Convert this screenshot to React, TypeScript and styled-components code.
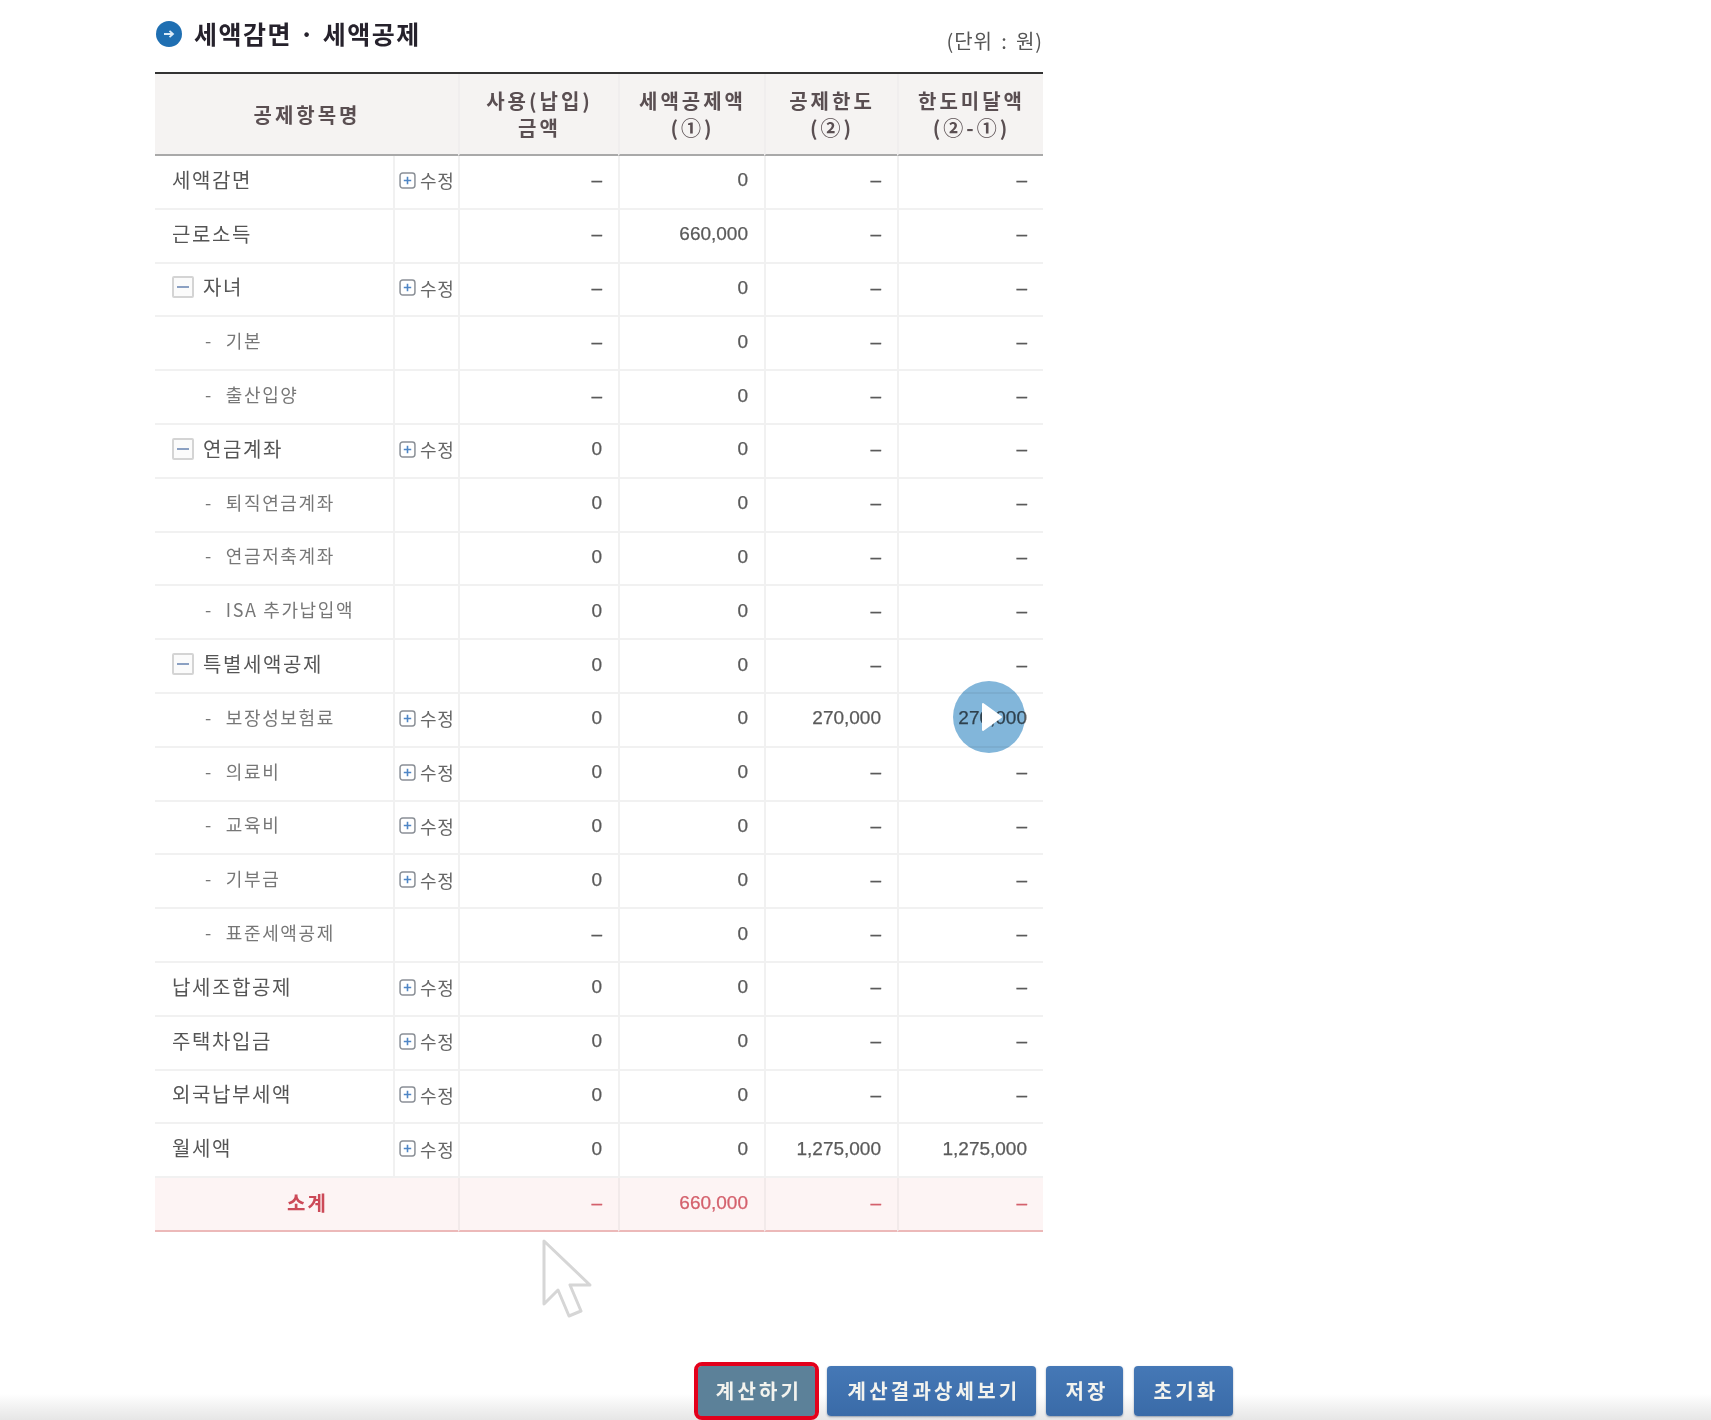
import React from 'react';
import styled, { createGlobalStyle } from 'styled-components';

const KR = `"Noto Sans CJK KR", "Noto Sans", sans-serif`;
const NUM = `"Liberation Sans", "Noto Sans CJK KR", sans-serif`;

const GlobalStyle = createGlobalStyle`
    html, body {
        margin: 0;
        padding: 0;
        background: #fff;
    }
`;

interface RowData {
    name: string;
    level: 'top' | 'group' | 'child';
    edit?: boolean;
    used: string;
    credit: string;
    limit: string;
    remain: string;
}

const rows: RowData[] = [
    { name: '세액감면', level: 'top', edit: true, used: '–', credit: '0', limit: '–', remain: '–' },
    { name: '근로소득', level: 'top', used: '–', credit: '660,000', limit: '–', remain: '–' },
    { name: '자녀', level: 'group', edit: true, used: '–', credit: '0', limit: '–', remain: '–' },
    { name: '기본', level: 'child', used: '–', credit: '0', limit: '–', remain: '–' },
    { name: '출산입양', level: 'child', used: '–', credit: '0', limit: '–', remain: '–' },
    { name: '연금계좌', level: 'group', edit: true, used: '0', credit: '0', limit: '–', remain: '–' },
    { name: '퇴직연금계좌', level: 'child', used: '0', credit: '0', limit: '–', remain: '–' },
    { name: '연금저축계좌', level: 'child', used: '0', credit: '0', limit: '–', remain: '–' },
    { name: 'ISA 추가납입액', level: 'child', used: '0', credit: '0', limit: '–', remain: '–' },
    { name: '특별세액공제', level: 'group', used: '0', credit: '0', limit: '–', remain: '–' },
    { name: '보장성보험료', level: 'child', edit: true, used: '0', credit: '0', limit: '270,000', remain: '270,000' },
    { name: '의료비', level: 'child', edit: true, used: '0', credit: '0', limit: '–', remain: '–' },
    { name: '교육비', level: 'child', edit: true, used: '0', credit: '0', limit: '–', remain: '–' },
    { name: '기부금', level: 'child', edit: true, used: '0', credit: '0', limit: '–', remain: '–' },
    { name: '표준세액공제', level: 'child', used: '–', credit: '0', limit: '–', remain: '–' },
    { name: '납세조합공제', level: 'top', edit: true, used: '0', credit: '0', limit: '–', remain: '–' },
    { name: '주택차입금', level: 'top', edit: true, used: '0', credit: '0', limit: '–', remain: '–' },
    { name: '외국납부세액', level: 'top', edit: true, used: '0', credit: '0', limit: '–', remain: '–' },
    { name: '월세액', level: 'top', edit: true, used: '0', credit: '0', limit: '1,275,000', remain: '1,275,000' },
];

const Page = styled.div`
    position: relative;
    height: 1420px;
    display: flex;
    flex-direction: column;
    overflow: hidden;
    filter: blur(0.45px);
`;

const Content = styled.main`
    width: 888px;
    margin-left: 155px;
    flex: 1;
`;

const TitleRow = styled.header`
    height: 72px;
    display: flex;
    justify-content: space-between;
    box-sizing: border-box;
`;

const Title = styled.h2`
    margin: 16px 0 0;
    display: flex;
    align-items: center;
    gap: 12px;
    height: 34px;
    font: 700 25px/34px ${KR};
    color: #26222c;
    letter-spacing: 1.5px;
`;

const TitleIcon = styled.svg`
    width: 26px;
    height: 26px;
    flex: none;
    margin: 2px 0 0 1px;
`;

const Unit = styled.span`
    margin-top: 27px;
    font: 400 20px/28px ${KR};
    letter-spacing: 0.9px;
    word-spacing: 3px;
    color: #555;
`;

const Table = styled.table`
    width: 888px;
    table-layout: fixed;
    border-collapse: separate;
    border-spacing: 0;
    border-top: 2px solid #333;
`;

const HeadCell = styled.th`
    box-sizing: border-box;
    height: 82px;
    padding: 0 0 0 1px;
    background: #f5f3f2;
    border-bottom: 2px solid #a9a9a9;
    border-left: 2px solid #f0eeee;
    font: 700 20px/27px ${KR};
    letter-spacing: 3px;
    color: #5a4f52;
    text-align: center;

    &:first-child {
        border-left: 0;
    }
`;

const NameCell = styled.td<{ $level: RowData['level'] }>`
    box-sizing: border-box;
    height: 53.8px;
    padding: 0 0 ${(p) => (p.$level === 'child' ? 6 : 4)}px ${(p) => (p.$level === 'child' ? 50 : 17)}px;
    border-bottom: 2px solid #f1f1f1;
    font: 400 ${(p) => (p.$level === 'child' ? 18 : 20)}px/24px ${KR};
    letter-spacing: 1.6px;
    color: ${(p) => (p.$level === 'child' ? '#777' : '#555')};
    white-space: nowrap;
`;

const NameInner = styled.span`
    display: flex;
    align-items: center;
    gap: 9px;
`;

const ChildDash = styled.span`
    margin-right: 4px;
`;

const Toggle = styled.span`
    box-sizing: border-box;
    width: 22px;
    height: 22px;
    flex: none;
    display: flex;
    align-items: center;
    justify-content: center;
    border: 2px solid #d4d4d4;
    border-radius: 2px;
    background: #fbfbfb;

    &::before {
        content: '';
        width: 12px;
        height: 2px;
        background: #8ba0c2;
    }
`;

const EditCell = styled.td`
    box-sizing: border-box;
    padding: 0 0 3px 4px;
    border-left: 2px solid #f1f1f1;
    border-bottom: 2px solid #f1f1f1;
    font: 400 18px/24px ${KR};
    letter-spacing: 0.6px;
    color: #666;
    white-space: nowrap;
`;

const EditInner = styled.span`
    display: flex;
    align-items: center;
    gap: 4px;
`;

const PlusIcon = styled.svg`
    width: 17px;
    height: 17px;
    flex: none;
`;

const NumCell = styled.td`
    box-sizing: border-box;
    padding: 0 16px 3px 0;
    border-left: 2px solid #f1f1f1;
    border-bottom: 2px solid #f1f1f1;
    font: 400 19px/24px ${NUM};
    -webkit-text-stroke: 0.25px currentColor;
    color: #5a5a5a;
    text-align: right;
`;

const TotalName = styled.td`
    box-sizing: border-box;
    height: 53.8px;
    padding: 0 0 3px 2px;
    background: #fdf4f4;
    border-bottom: 2px solid #ecb9b9;
    font: 700 20px/24px ${KR};
    color: #cc4a58;
    letter-spacing: 2px;
    text-align: center;
`;

const TotalNum = styled(NumCell)`
    background: #fdf4f4;
    border-left-color: #f2eaea;
    border-bottom-color: #ecb9b9;
    color: #d4606c;
`;

const PlayBadge = styled.div`
    position: absolute;
    left: 953px;
    top: 681px;
    width: 72px;
    height: 72px;
    display: flex;
    align-items: center;
    justify-content: center;

    &::before {
        content: '';
        position: absolute;
        inset: 0;
        border-radius: 50%;
        background: #82b6da;
        mix-blend-mode: multiply;
    }
`;

const PlayIcon = styled.svg`
    position: relative;
    width: 22px;
    height: 30px;
    margin-left: 5px;
`;

const Cursor = styled.svg`
    position: absolute;
    left: 540px;
    top: 1236px;
    width: 54px;
    height: 84px;
`;

const Footer = styled.footer`
    height: 60px;
    padding-left: 694px;
    display: flex;
    align-items: flex-start;
    background: linear-gradient(to bottom, #fff 0, #fff 34px, #f1f1f1 48px, #e6e6e6 60px);
`;

const Button = styled.button<{ $width: number; $active?: boolean; $gap?: number }>`
    box-sizing: border-box;
    width: ${(p) => p.$width}px;
    height: 50px;
    margin: 6px 0 0 ${(p) => p.$gap ?? 0}px;
    padding: 0 0 0 5px;
    border: 0;
    border-radius: 4px;
    background: linear-gradient(to bottom, #4578b6, #3a6ba8);
    box-shadow: 0 1px 2px rgba(60, 80, 110, 0.5);
    font: 700 20px/1 ${KR};
    letter-spacing: 3.2px;
    color: #f3f3ee;

    ${(p) =>
        p.$active &&
        `
        background: #5c8199;
        outline: 4px solid #e3001b;
        outline-offset: 0;
        margin-left: 4px;
        `}
`;

const Plus = () => (
    <PlusIcon viewBox="0 0 16 16">
        <rect x="1" y="1" width="14" height="14" rx="2.5" fill="#fff" stroke="#8a8f96" strokeWidth="1.4" />
        <path d="M8 4.5v7M4.5 8h7" stroke="#4f86c6" strokeWidth="1.5" />
    </PlusIcon>
);

const App = () => (
    <Page>
        <GlobalStyle />
        <Content>
            <TitleRow>
                <Title>
                    <TitleIcon viewBox="0 0 26 26">
                        <circle cx="13" cy="13" r="13" fill="#1f6fb2" />
                        <path d="M8 13h9M13.5 9.8 17 13l-3.5 3.2" fill="none" stroke="#dcecf8" strokeWidth="1.8" />
                    </TitleIcon>
                    세액감면 · 세액공제
                </Title>
                <Unit>(단위 : 원)</Unit>
            </TitleRow>
            <Table>
                <colgroup>
                    <col width={238} />
                    <col width={65} />
                    <col width={160} />
                    <col width={146} />
                    <col width={133} />
                    <col width={146} />
                </colgroup>
                <thead>
                    <tr>
                        <HeadCell colSpan={2}>공제항목명</HeadCell>
                        <HeadCell>
                            사용(납입)
                            <br />
                            금액
                        </HeadCell>
                        <HeadCell>
                            세액공제액
                            <br />
                            (①)
                        </HeadCell>
                        <HeadCell>
                            공제한도
                            <br />
                            (②)
                        </HeadCell>
                        <HeadCell>
                            한도미달액
                            <br />
                            (②-①)
                        </HeadCell>
                    </tr>
                </thead>
                <tbody>
                    {rows.map((row) => (
                        <tr key={row.name}>
                            <NameCell $level={row.level}>
                                <NameInner>
                                    {row.level === 'group' && <Toggle />}
                                    {row.level === 'child' && <ChildDash>-</ChildDash>}
                                    {row.name}
                                </NameInner>
                            </NameCell>
                            <EditCell>
                                {row.edit && (
                                    <EditInner>
                                        <Plus />
                                        수정
                                    </EditInner>
                                )}
                            </EditCell>
                            <NumCell>{row.used}</NumCell>
                            <NumCell>{row.credit}</NumCell>
                            <NumCell>{row.limit}</NumCell>
                            <NumCell>{row.remain}</NumCell>
                        </tr>
                    ))}
                    <tr>
                        <TotalName colSpan={2}>소계</TotalName>
                        <TotalNum>–</TotalNum>
                        <TotalNum>660,000</TotalNum>
                        <TotalNum>–</TotalNum>
                        <TotalNum>–</TotalNum>
                    </tr>
                </tbody>
            </Table>
        </Content>
        <Footer>
            <Button $width={117} $active>
                계산하기
            </Button>
            <Button $width={209} $gap={12}>
                계산결과상세보기
            </Button>
            <Button $width={77} $gap={10}>
                저장
            </Button>
            <Button $width={99} $gap={11}>
                초기화
            </Button>
        </Footer>
        <PlayBadge>
            <PlayIcon viewBox="0 0 22 30">
                <path d="M2 2 20 15 2 28Z" fill="#fff" stroke="#fff" strokeWidth="2" strokeLinejoin="round" />
            </PlayIcon>
        </PlayBadge>
        <Cursor viewBox="0 0 54 84">
            <path
                d="M4 5V68L18 54 29 80 41 75 30 49H50Z"
                fill="#fff"
                stroke="#d6d6d6"
                strokeWidth="3"
                strokeLinejoin="round"
            />
        </Cursor>
    </Page>
);

export default App;
